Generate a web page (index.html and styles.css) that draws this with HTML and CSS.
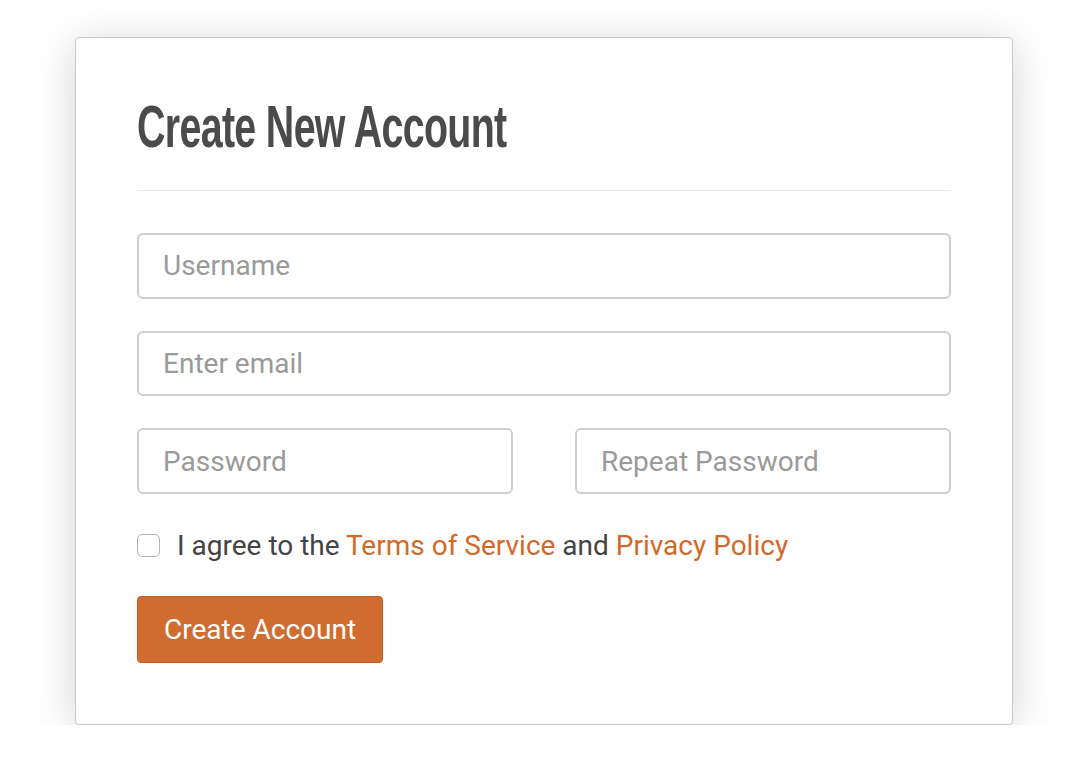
FILE: index.html
```html
<!DOCTYPE html>
<html lang="en">
<head>
<meta charset="utf-8">
<title>Create New Account</title>
<link rel="stylesheet" href="styles.css">
</head>
<body>
<div class="page">
  <form class="card">
    <h1 class="title">Create New Account</h1>
    <hr class="divider">
    <input class="field" type="text" placeholder="Username">
    <input class="field" type="email" placeholder="Enter email">
    <div class="row">
      <input class="field" type="password" placeholder="Password">
      <input class="field" type="password" placeholder="Repeat Password">
    </div>
    <label class="agree">
      <span class="box"></span>
      <span>I agree to the <a href="#" class="link">Terms of Service</a> and <a href="#" class="link">Privacy Policy</a></span>
    </label>
    <div><button type="button" class="btn">Create Account</button></div>
  </form>
</div>
</body>
</html>
```
FILE: styles.css
```css
* { box-sizing: border-box; }
html, body { margin: 0; background: #fff; }
body { font-family: Roboto, "Liberation Sans", sans-serif; }
.page { padding: 37px 0 0 75px; }
.card {
  width: 938px;
  height: 688px;
  border: 1px solid #c8c8c8;
  border-radius: 4px;
  background: #fff;
  box-shadow: 0 6px 44px rgba(0,0,0,0.17);
  padding: 61px;
  display: flex;
  flex-direction: column;
}
.title {
  margin: 0;
  font-family: "Liberation Sans Narrow", "Liberation Sans", sans-serif;
  font-weight: 700;
  font-size: 60px;
  line-height: 56px;
  color: #4b4b4b;
  letter-spacing: -1px;
  transform: scaleX(0.656);
  transform-origin: left center;
  white-space: nowrap;
}
.divider {
  border: 0;
  border-top: 1px solid #e9e9e9;
  margin: 35px 0 42px 0;
  height: 0;
}
.field {
  display: block;
  width: 100%;
  height: 66px;
  border: 2px solid #cfcfcf;
  border-radius: 6px;
  padding: 0 24px;
  font-family: Roboto, "Liberation Sans", sans-serif;
  font-size: 28px;
  color: #555;
  margin-bottom: 32px;
  outline: none;
}
.field::placeholder { color: #9a9a9a; }
.row { display: grid; grid-template-columns: 1fr 1fr; column-gap: 62px; }
.agree {
  display: flex;
  align-items: center;
  gap: 17px;
  font-size: 28px;
  line-height: 33px;
  color: #444;
  margin-top: 3px;
  margin-bottom: 34px;
}
.box {
  width: 23px; height: 23px;
  border: 1px solid #b5b5b5;
  border-radius: 5px;
  background: #fff;
  flex: none;
}
.link { color: #d2692b; text-decoration: none; }
.btn {
  height: 67px;
  padding: 0 26px;
  background: #d06c2f;
  border: 1px solid #bf5f24;
  border-radius: 4px;
  color: #fff;
  font-family: Roboto, "Liberation Sans", sans-serif;
  font-size: 28px;
  cursor: pointer;
}
```
